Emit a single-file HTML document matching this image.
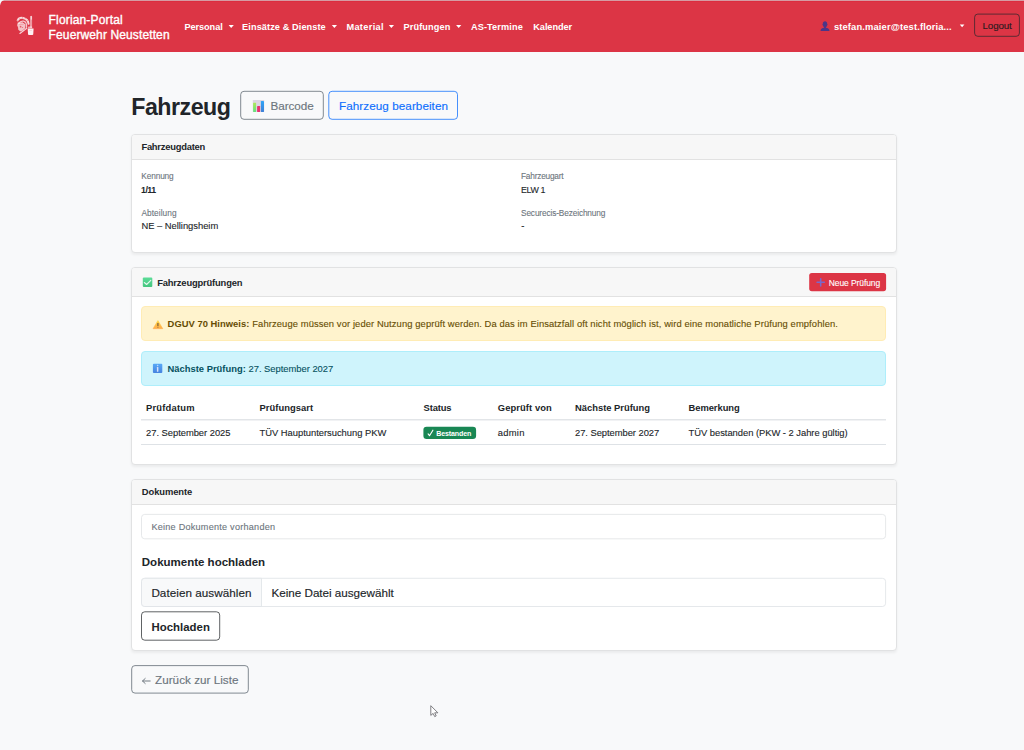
<!DOCTYPE html>
<html lang="de"><head><meta charset="utf-8"><title>Fahrzeug</title>
<style>
html,body{margin:0;padding:0;}
body{width:1024px;height:750px;overflow:hidden;background:#f8f9fa;position:relative;font-family:"Liberation Sans", sans-serif;}
.t{position:absolute;white-space:nowrap;line-height:1;font-family:"Liberation Sans", sans-serif;}
.b{position:absolute;box-sizing:border-box;}
svg{position:absolute;overflow:visible;}
</style></head><body>
<!-- NAVBAR -->
<div class="b" style="left:0;top:0;width:1024px;height:52px;background:#dc3545;"></div>
<div class="b" style="left:0;top:0;width:1024px;height:1px;background:#d59ca3;"></div>
<div class="b" style="left:0;top:1px;width:1024px;height:1px;background:#dc2d3f;"></div>
<svg style="left:0px;top:0px" width="6" height="7" viewBox="0 0 6 7"><g transform="translate(0 0)"><path d="M0 0H4.200C1.700 .7 .7 2.200 0 5.600Z" fill="#f6f8f9"/></g></svg>
<!-- cards/alerts/lines -->
<div class="b" style="left:131px;top:134px;width:766px;height:119px;background:#fff;border:1px solid #e1e2e3;border-radius:4px;box-shadow:0 1.5px 3px rgba(0,0,0,.055);"><div style="height:24px;background:#f7f7f7;border-bottom:1px solid #e2e2e2;border-radius:3px 3px 0 0;"></div></div>
<div class="b" style="left:131px;top:267px;width:766px;height:198px;background:#fff;border:1px solid #e1e2e3;border-radius:4px;box-shadow:0 1.5px 3px rgba(0,0,0,.055);"><div style="height:28px;background:#f7f7f7;border-bottom:1px solid #e2e2e2;border-radius:3px 3px 0 0;"></div></div>
<div class="b" style="left:131px;top:479px;width:766px;height:172px;background:#fff;border:1px solid #e1e2e3;border-radius:4px;box-shadow:0 1.5px 3px rgba(0,0,0,.055);"><div style="height:24px;background:#f7f7f7;border-bottom:1px solid #e2e2e2;border-radius:3px 3px 0 0;"></div></div>
<div class="b" style="left:141px;top:306px;width:745px;height:35px;background:#fff3cd;border:1px solid #ffecb5;border-radius:4px;"></div>
<div class="b" style="left:141px;top:351px;width:745px;height:35px;background:#cff4fc;border:1px solid #aeeefb;border-radius:4px;"></div>
<div class="b" style="left:141px;top:419px;width:745px;height:1px;background:#e2e5e8;"></div>
<div class="b" style="left:141px;top:420px;width:745px;height:1px;background:#f1f2f4;"></div>
<div class="b" style="left:141px;top:444px;width:745px;height:1px;background:#dee2e6;"></div>
<!-- overlay boxes -->
<svg id="ov" style="left:0;top:0" width="1024" height="750" viewBox="0 0 1024 750">
<rect x="974.6" y="14.1" width="44.80" height="22.20" rx="3.2" fill="none" stroke="#212529" stroke-width="0.85" opacity=".8"/>
<rect x="240.7" y="91.3" width="82.60" height="28.00" rx="3.3" fill="none" stroke="#6c757d" stroke-width="0.85"/>
<rect x="328.8" y="91.3" width="128.70" height="28.00" rx="3.3" fill="none" stroke="#0d6efd" stroke-width="0.9" opacity=".85"/>
<rect x="809.2" y="272.9" width="76.90" height="18.30" rx="2.6" fill="#dc3545"/>
<rect x="423.4" y="426.7" width="52.70" height="12.30" rx="3.2" fill="#198754"/>
<rect x="141.5" y="514.4" width="744.10" height="24.40" rx="3.2" fill="#fff" stroke="#dfe2e5" stroke-width="0.8"/>
<rect x="141.5" y="578.3" width="744.10" height="28.20" rx="3.2" fill="#fff" stroke="#dee2e6" stroke-width="0.8"/>
<path d="M144.700 578.300H261.500V606.500H144.700a3.200 3.200 0 0 1-3.200-3.200V581.500a3.200 3.200 0 0 1 3.200-3.200z" fill="#f8f9fa" stroke="#dee2e6" stroke-width=".8"/>
<rect x="141.5" y="611.8" width="78.20" height="28.40" rx="3.3" fill="none" stroke="#212529" stroke-width="0.85" opacity=".85"/>
<rect x="131.7" y="665.6" width="116.60" height="27.50" rx="3.3" fill="none" stroke="#6c757d" stroke-width="0.85"/>
<path d="M142.600 681H150.200M145.200 678.500L142.500 681L145.200 683.500" fill="none" stroke="#6c757d" stroke-width=".95" stroke-linecap="round" stroke-linejoin="round"/>
</svg>
<!-- logo -->
<svg style="left:14px;top:13px" width="25" height="25" viewBox="0 0 25 25"><g transform="translate(0 0)">
 <g fill="none" stroke="#fff" stroke-linecap="round">
  <path d="M3.700 7.400Q5 4.200 9.200 5Q14 6.200 14.600 10.800" stroke-width="2" opacity=".82"/>
  <path d="M3.400 7.300l1.200 .5M5.500 5l.8 1.200M8.500 4l.2 1.400M11.500 5.200l-.6 1.200M13.600 7.500l-1.100 .8" stroke="#dc3545" stroke-width=".45" opacity=".7"/>
  <path d="M4.800 10.400Q6.300 7.700 9.600 8.200Q13 9.200 12.600 14.200" stroke-width="1.250" opacity=".72"/>
  <path d="M12.700 15.300L5.900 20.400" stroke-width="1.200" opacity=".78"/>
 </g>
 <g fill="#fff">
  <path d="M3.800 9.400L3.100 12.300 4.100 14.400 4.300 16.800 6.400 18.600 9.200 17.200 11.200 15.200 11.600 11.400 8.600 9.300 5.500 9.400Z" opacity=".7"/>
  <circle cx="6.600" cy="13.700" r=".85" fill="#dc3545" opacity=".75"/>
  <circle cx="8.500" cy="14.500" r=".6" fill="#dc3545" opacity=".6"/>
  <path d="M5.200 11.300h4.400" stroke="#dc3545" stroke-width=".5" opacity=".5"/>
  <path d="M9.800 16.200l1 1" stroke="#dc3545" stroke-width=".6" opacity=".6"/>
  <rect x="16" y="2.900" width="2.100" height="11.800" rx=".8" opacity=".5"/>
  <rect x="16.800" y="2.700" width="1.200" height="4" rx=".6" opacity=".55"/>
  <path d="M14.200 13.500h3.800l.3 1.700h-4.400z" opacity=".6"/>
  <path d="M13.700 15.500h5.900l-.35 5.700c0 .5-.4.850-.9.850h-3.400c-.5 0-.9-.35-.9-.85z" opacity=".93"/>
  <path d="M15.300 17.500h2.600" stroke="#dc3545" stroke-width=".4" opacity=".35"/>
 </g>
</g></svg>
<!-- carets -->
<svg style="left:228px;top:24px" width="8" height="6" viewBox="0 0 8 6"><g transform="translate(0.2 0.9)"><path d="M.4 .2h5.200L3 3z" fill="#fff"/></g></svg>
<svg style="left:331px;top:24px" width="8" height="6" viewBox="0 0 8 6"><g transform="translate(0.4 0.9)"><path d="M.4 .2h5.200L3 3z" fill="#fff"/></g></svg>
<svg style="left:388px;top:24px" width="8" height="6" viewBox="0 0 8 6"><g transform="translate(0.4 0.9)"><path d="M.4 .2h5.200L3 3z" fill="#fff"/></g></svg>
<svg style="left:455px;top:24px" width="8" height="6" viewBox="0 0 8 6"><g transform="translate(0.7 0.9)"><path d="M.4 .2h5.200L3 3z" fill="#fff"/></g></svg>
<svg style="left:959px;top:24px" width="7" height="5" viewBox="0 0 7 5"><g transform="translate(0.4 0.4)"><path d="M.4 .2h4.600L2.700 2.800z" fill="#fff"/></g></svg>
<!-- user icon -->
<svg style="left:820px;top:21px" width="11" height="11" viewBox="0 0 11 11"><g transform="translate(0 0)">
 <path d="M5 .3c1.300 0 2.200 1 2.200 2.400 0 .3.500.5.400 1-.1.500-.5.600-.6.900-.2.900-.7 1.500-1.200 1.800v.4c1.800.2 3.400.9 3.600 2.400v.7H.6v-.7c.2-1.500 1.800-2.200 3.600-2.400v-.4c-.5-.3-1-.9-1.200-1.800-.1-.3-.5-.4-.6-.9-.1-.5.400-.7.400-1C2.800 1.300 3.700.3 5 .3z" fill="#4b3587"/>
</g></svg>

<!-- heading buttons -->
<svg style="left:252px;top:100px" width="14" height="13" viewBox="0 0 14 13"><g transform="translate(0.5 0)">
 <defs>
  <linearGradient id="g1" x1="0" y1="0" x2="0" y2="1"><stop offset="0" stop-color="#b0e95a"/><stop offset="1" stop-color="#63df80"/></linearGradient>
  <linearGradient id="g2" x1="0" y1="0" x2="0" y2="1"><stop offset="0" stop-color="#2fa5f8"/><stop offset="1" stop-color="#3d7fd6"/></linearGradient>
 </defs>
 <rect x=".3" y="0" width="11.400" height="12" rx=".6" fill="#dcd6e3"/>
 <rect x=".6" y="2.700" width="3" height="9.300" rx=".4" fill="url(#g1)"/>
 <rect x="4.600" y="6" width="3" height="6" rx=".4" fill="#e9316f"/>
 <rect x="8.400" y="1" width="3.100" height="11" rx=".4" fill="url(#g2)"/>
</g></svg>

<!-- CARD 1 -->

<!-- CARD 2 -->
<!-- check icon -->
<svg style="left:142px;top:277px" width="12" height="12" viewBox="0 0 12 12"><g transform="translate(0.8 0.6)">
 <defs><linearGradient id="g3" x1="0" y1="0" x2="0" y2="1"><stop offset="0" stop-color="#5bdc97"/><stop offset="1" stop-color="#45c57f"/></linearGradient></defs>
 <rect x="0" y="0" width="9.500" height="9.500" rx="1" fill="url(#g3)"/>
 <path d="M1.500 4.900l2.300 2 4.200-4.100" fill="none" stroke="#e6f7ee" stroke-width="1.100" stroke-linecap="round" stroke-linejoin="round"/>
</g></svg>
<!-- new pruefung btn -->
<svg style="left:816px;top:278px" width="10" height="10" viewBox="0 0 10 10"><g transform="translate(0.7 0.3) scale(0.93 0.93)"><path d="M4.300 .4v7.800M.4 4.300h7.800" stroke="#7968cb" stroke-width="1.700" stroke-linecap="round"/></g></svg>
<!-- warning alert -->
<svg style="left:152px;top:320px" width="13" height="10" viewBox="0 0 13 10"><g transform="translate(0.6 0)">
 <defs><linearGradient id="g4" x1="0" y1="0" x2="0" y2="1"><stop offset="0" stop-color="#ffd53e"/><stop offset="1" stop-color="#ffab4c"/></linearGradient></defs>
 <path d="M5.300 .5L10.200 8.700H.4z" fill="url(#g4)" stroke="url(#g4)" stroke-width=".5" stroke-linejoin="round"/>
 <rect x="4.600" y="3" width="1.400" height="3.300" rx=".5" fill="#8d6b3e"/>
 <rect x="4.600" y="6.900" width="1.400" height="1.200" rx=".5" fill="#b98a45"/>
</g></svg>
<!-- info alert -->
<svg style="left:152px;top:363px" width="12" height="11" viewBox="0 0 12 11"><g transform="translate(0.9 0.7)">
 <defs><linearGradient id="g5" x1="0" y1="0" x2="0" y2="1"><stop offset="0" stop-color="#58a9f7"/><stop offset="1" stop-color="#4683df"/></linearGradient></defs>
 <rect x="0" y="0" width="9.400" height="9.300" rx="1" fill="url(#g5)"/>
 <rect x="4" y="1.100" width="1.500" height="1.400" rx=".6" fill="#b9d8fb"/>
 <rect x="4" y="3.300" width="1.500" height="4.800" rx=".5" fill="#d6e0fb"/>
</g></svg>
<!-- table lines -->
<!-- badge -->

<svg style="left:427px;top:429px" width="8" height="9" viewBox="0 0 8 9"><g transform="translate(0.6 0.6)"><path d="M.5 4.300L1.900 6.100 5.300 .600" fill="none" stroke="#fff" stroke-width="1.100" stroke-linecap="round" stroke-linejoin="round"/></g></svg>
<!-- CARD 3 -->
<!-- back btn -->
<!-- cursor -->
<svg style="left:430px;top:705px" width="11" height="14" viewBox="0 0 11 14"><g transform="translate(0 0)"><path d="M.8 .7v9.700l2.300-2 1.600 3.200 1.500-.7-1.500-3.100h3.200z" fill="#fff" stroke="#707075" stroke-width=".9" stroke-linejoin="round"/></g></svg>

<span class="t" style="left:48.60px;top:13.74px;font-size:12.0px;color:#fff;-webkit-text-stroke:0.36px #fff;letter-spacing:0.157px;">Florian-Portal</span>
<span class="t" style="left:48.60px;top:29.34px;font-size:12.0px;color:#fff;-webkit-text-stroke:0.36px #fff;letter-spacing:0.118px;">Feuerwehr Neustetten</span>
<span class="t" style="left:184.40px;top:23.11px;font-size:9.2px;color:#fff;font-weight:700;letter-spacing:-0.065px;">Personal</span>
<span class="t" style="left:242.10px;top:23.11px;font-size:9.2px;color:#fff;font-weight:700;letter-spacing:0.083px;">Einsätze &amp; Dienste</span>
<span class="t" style="left:346.40px;top:23.11px;font-size:9.2px;color:#fff;font-weight:700;letter-spacing:0.347px;">Material</span>
<span class="t" style="left:403.50px;top:23.11px;font-size:9.2px;color:#fff;font-weight:700;letter-spacing:0.110px;">Prüfungen</span>
<span class="t" style="left:470.90px;top:23.11px;font-size:9.2px;color:#fff;font-weight:700;letter-spacing:0.114px;">AS-Termine</span>
<span class="t" style="left:533.30px;top:23.11px;font-size:9.2px;color:#fff;font-weight:700;letter-spacing:-0.077px;">Kalender</span>
<span class="t" style="left:833.90px;top:22.24px;font-size:9.4px;color:#fff;font-weight:700;letter-spacing:0.131px;">stefan.maier@test.floria...</span>
<span class="t" style="left:982.60px;top:20.80px;font-size:9.8px;color:#2a1b1f;-webkit-text-stroke:0.12px #2a1b1f;letter-spacing:-0.169px;">Logout</span>
<span class="t" style="left:131.30px;top:96.36px;font-size:23.2px;color:#212529;font-weight:700;letter-spacing:-0.500px;">Fahrzeug</span>
<span class="t" style="left:270.50px;top:100.20px;font-size:11.7px;color:#6c757d;-webkit-text-stroke:0.14px #6c757d;letter-spacing:-0.055px;">Barcode</span>
<span class="t" style="left:339.00px;top:100.20px;font-size:11.7px;color:#0d6efd;-webkit-text-stroke:0.14px #0d6efd;letter-spacing:0.063px;">Fahrzeug bearbeiten</span>
<span class="t" style="left:141.40px;top:142.34px;font-size:9.4px;color:#212529;font-weight:700;letter-spacing:-0.229px;">Fahrzeugdaten</span>
<span class="t" style="left:141.30px;top:171.57px;font-size:8.3px;color:#6c757d;-webkit-text-stroke:0.10px #6c757d;letter-spacing:-0.134px;">Kennung</span>
<span class="t" style="left:141.00px;top:186.05px;font-size:8.8px;color:#212529;font-weight:700;letter-spacing:-0.481px;">1/11</span>
<span class="t" style="left:141.40px;top:209.37px;font-size:8.3px;color:#6c757d;-webkit-text-stroke:0.10px #6c757d;letter-spacing:0.077px;">Abteilung</span>
<span class="t" style="left:141.40px;top:221.24px;font-size:9.4px;color:#212529;-webkit-text-stroke:0.11px #212529;letter-spacing:-0.019px;">NE – Nellingsheim</span>
<span class="t" style="left:521.00px;top:171.57px;font-size:8.3px;color:#6c757d;-webkit-text-stroke:0.10px #6c757d;letter-spacing:-0.213px;">Fahrzeugart</span>
<span class="t" style="left:521.00px;top:185.97px;font-size:8.9px;color:#212529;-webkit-text-stroke:0.11px #212529;letter-spacing:-0.385px;">ELW 1</span>
<span class="t" style="left:521.00px;top:209.37px;font-size:8.3px;color:#6c757d;-webkit-text-stroke:0.10px #6c757d;letter-spacing:-0.138px;">Securecis-Bezeichnung</span>
<span class="t" style="left:521.30px;top:221.24px;font-size:9.4px;color:#212529;-webkit-text-stroke:0.11px #212529;">-</span>
<span class="t" style="left:157.20px;top:277.84px;font-size:9.4px;color:#212529;font-weight:700;letter-spacing:-0.168px;">Fahrzeugprüfungen</span>
<span class="t" style="left:828.80px;top:279.20px;font-size:8.5px;color:#fff;-webkit-text-stroke:0.10px #fff;letter-spacing:-0.102px;">Neue Prüfung</span>
<span class="t" style="left:167.60px;top:319.24px;font-size:9.4px;color:#664d03;font-weight:700;letter-spacing:0.030px;">DGUV 70 Hinweis:</span>
<span class="t" style="left:252.30px;top:319.24px;font-size:9.4px;color:#664d03;-webkit-text-stroke:0.11px #664d03;letter-spacing:0.100px;">Fahrzeuge müssen vor jeder Nutzung geprüft werden. Da das im Einsatzfall oft nicht möglich ist, wird eine monatliche Prüfung empfohlen.</span>
<span class="t" style="left:167.50px;top:364.04px;font-size:9.4px;color:#055160;font-weight:700;letter-spacing:0.013px;">Nächste Prüfung:</span>
<span class="t" style="left:248.50px;top:364.04px;font-size:9.4px;color:#055160;-webkit-text-stroke:0.11px #055160;letter-spacing:-0.014px;">27. September 2027</span>
<span class="t" style="left:146.00px;top:402.94px;font-size:9.4px;color:#212529;font-weight:700;letter-spacing:0.208px;">Prüfdatum</span>
<span class="t" style="left:259.50px;top:402.94px;font-size:9.4px;color:#212529;font-weight:700;letter-spacing:0.049px;">Prüfungsart</span>
<span class="t" style="left:423.60px;top:402.94px;font-size:9.4px;color:#212529;font-weight:700;letter-spacing:-0.148px;">Status</span>
<span class="t" style="left:497.80px;top:402.94px;font-size:9.4px;color:#212529;font-weight:700;letter-spacing:0.090px;">Geprüft von</span>
<span class="t" style="left:575.00px;top:402.94px;font-size:9.4px;color:#212529;font-weight:700;">Nächste Prüfung</span>
<span class="t" style="left:688.50px;top:402.94px;font-size:9.4px;color:#212529;font-weight:700;letter-spacing:-0.044px;">Bemerkung</span>
<span class="t" style="left:146.00px;top:427.84px;font-size:9.4px;color:#212529;-webkit-text-stroke:0.11px #212529;letter-spacing:-0.026px;">27. September 2025</span>
<span class="t" style="left:259.50px;top:427.84px;font-size:9.4px;color:#212529;-webkit-text-stroke:0.11px #212529;letter-spacing:-0.012px;">TÜV Hauptuntersuchung PKW</span>
<span class="t" style="left:436.20px;top:430.59px;font-size:7.1px;color:#fff;font-weight:700;letter-spacing:-0.129px;">Bestanden</span>
<span class="t" style="left:497.80px;top:427.84px;font-size:9.4px;color:#212529;-webkit-text-stroke:0.11px #212529;letter-spacing:0.270px;">admin</span>
<span class="t" style="left:575.00px;top:427.84px;font-size:9.4px;color:#212529;-webkit-text-stroke:0.11px #212529;letter-spacing:-0.044px;">27. September 2027</span>
<span class="t" style="left:688.50px;top:427.84px;font-size:9.4px;color:#212529;-webkit-text-stroke:0.11px #212529;letter-spacing:-0.024px;">TÜV bestanden (PKW - 2 Jahre gültig)</span>
<span class="t" style="left:141.80px;top:487.24px;font-size:9.4px;color:#212529;font-weight:700;letter-spacing:-0.079px;">Dokumente</span>
<span class="t" style="left:151.40px;top:523.30px;font-size:9.1px;color:#6c757d;-webkit-text-stroke:0.11px #6c757d;letter-spacing:0.244px;">Keine Dokumente vorhanden</span>
<span class="t" style="left:141.80px;top:556.67px;font-size:11.5px;color:#212529;font-weight:700;">Dokumente hochladen</span>
<span class="t" style="left:151.40px;top:587.10px;font-size:11.7px;color:#212529;-webkit-text-stroke:0.14px #212529;letter-spacing:0.043px;">Dateien auswählen</span>
<span class="t" style="left:271.50px;top:587.10px;font-size:11.7px;color:#212529;-webkit-text-stroke:0.14px #212529;letter-spacing:-0.026px;">Keine Datei ausgewählt</span>
<span class="t" style="left:151.40px;top:621.75px;font-size:11.4px;color:#212529;font-weight:700;letter-spacing:0.041px;">Hochladen</span>
<span class="t" style="left:155.00px;top:674.30px;font-size:11.7px;color:#6c757d;-webkit-text-stroke:0.14px #6c757d;letter-spacing:0.024px;">Zurück zur Liste</span>
</body></html>
